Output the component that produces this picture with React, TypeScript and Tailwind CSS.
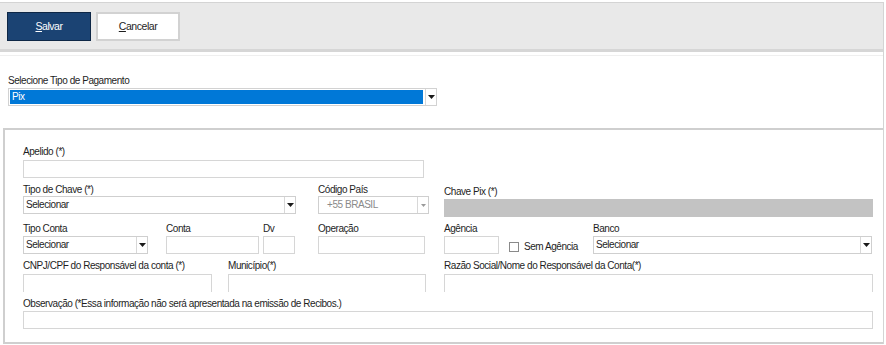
import React from "react";

const font = { fontFamily: '"Liberation Sans", Arial, sans-serif' };

function Arrow() {
  return (
    <svg width="7" height="4" viewBox="0 0 7 4" className="block">
      <path d="M0 0 L7 0 L3.5 4 Z" fill="#1a1a1a" />
    </svg>
  );
}

function Label({ children }: { children: React.ReactNode }) {
  return <div className="h-[13px] leading-[13px] text-[10px] text-[#1e1e1e] whitespace-nowrap">{children}</div>;
}

function Select({ text, w, disabled }: { text: string; w: number; disabled?: boolean }) {
  return (
    <div className="flex h-[18px] border border-[#cfcfcf] bg-white" style={{ width: w }}>
      <div className={"flex-1 leading-[16px] text-[10px] " + (disabled ? "pl-[8px] text-[#8a8a8a]" : "pl-[2px] text-[#1e1e1e]")}>{text}</div>
      <div className="w-[11px] border-l border-[#d8d8d8] flex items-center justify-center">
        {disabled ? (
          <svg width="5" height="3" viewBox="0 0 5 3"><path d="M0 0 L5 0 L2.5 3 Z" fill="#9a9a9a" /></svg>
        ) : (
          <Arrow />
        )}
      </div>
    </div>
  );
}

function Input({ w, open }: { w: number; open?: boolean }) {
  return (
    <div
      className={"h-[18px] bg-white border-[#d6d6d6] " + (open ? "border-t border-l border-r" : "border")}
      style={{ width: w }}
    />
  );
}

export default function App() {
  return (
    <div className="w-[886px] h-[345px] bg-white overflow-hidden tracking-[-0.45px]" style={font}>
      <div className="pt-[2px]">
        <div className="w-[884px] border-t border-r border-[#d4d4d4]">
          {/* Toolbar */}
          <div className="h-[46px] bg-[#e9e9e9] flex items-start pt-[9px] pl-[7px] gap-[5px]">
            <button className="w-[84px] h-[29px] bg-[#1b4373] border border-[#0e2746] text-white text-[10.5px] pt-[1px]">
              <span className="underline">S</span>alvar
            </button>
            <button className="w-[84px] h-[29px] bg-white border-2 border-[#d2d2d2] text-[#1e1e1e] text-[10.5px] pt-[1px]">
              <span className="underline">C</span>ancelar
            </button>
          </div>
          <div className="h-[3px] bg-[#d6d6d6]" />
          <div className="h-[3px] bg-white" />
          <div className="h-[1px] bg-[#efefef]" />

          {/* Tipo de Pagamento */}
          <div className="pl-[8px] pt-[18px]">
            <Label>Selecione Tipo de Pagamento</Label>
            <div className="mt-[1px] flex h-[18px] w-[429px] border border-[#d2d2d2] bg-white">
              <div className="flex-1 m-[1px] mr-[2px] bg-[#0078d7] text-white text-[10px] leading-[14px] pl-[2px]">Pix</div>
              <div className="w-[11px] border-l border-[#d8d8d8] flex items-center justify-center">
                <Arrow />
              </div>
            </div>
          </div>

          {/* Panel */}
          <div className="mt-[22px] ml-[3px] h-[216px] border-t-2 border-l-2 border-b-2 border-[#cfcfcf] pl-[18px] pt-[15px]">
            {/* Row 1 */}
            <div>
              <Label>Apelido (*)</Label>
              <div className="mt-[2px]"><Input w={401} /></div>
            </div>

            {/* Row 2 */}
            <div className="flex mt-[5px]">
              <div className="w-[273px]">
                <Label>Tipo de Chave (*)</Label>
                <Select text="Selecionar" w={273} />
              </div>
              <div className="ml-[22px] w-[111px]">
                <Label>Código País</Label>
                <Select text="+55 BRASIL" w={111} disabled />
              </div>
              <div className="ml-[15px] w-[429px]">
                <div className="mt-[2px]"><Label>Chave Pix (*)</Label></div>
                <div className="mt-[1px] h-[18px] w-[429px] bg-[#c3c3c3]" />
              </div>
            </div>

            {/* Row 3 */}
            <div className="flex mt-[5px]">
              <div className="w-[125px]">
                <Label>Tipo Conta</Label>
                <div className="mt-[1px]"><Select text="Selecionar" w={125} /></div>
              </div>
              <div className="ml-[18px] w-[93px]">
                <Label>Conta</Label>
                <div className="mt-[1px]"><Input w={93} /></div>
              </div>
              <div className="ml-[4px] w-[32px]">
                <Label>Dv</Label>
                <div className="mt-[1px]"><Input w={32} /></div>
              </div>
              <div className="ml-[23px] w-[107px]">
                <Label>Operação</Label>
                <div className="mt-[1px]"><Input w={107} /></div>
              </div>
              <div className="ml-[19px] w-[55px]">
                <Label>Agência</Label>
                <div className="mt-[1px]"><Input w={55} /></div>
              </div>
              <div className="w-[94px] pl-[10px] pt-[17px] flex items-start">
                <div className="w-[10px] h-[10px] border border-[#8a8a8a] bg-white mt-[3px]" />
                <span className="ml-[5px] text-[10px] text-[#1e1e1e] leading-[13px] mt-[1px] whitespace-nowrap">Sem Agência</span>
              </div>
              <div className="w-[279px]">
                <Label>Banco</Label>
                <div className="mt-[1px]"><Select text="Selecionar" w={279} /></div>
              </div>
            </div>

            {/* Row 4 */}
            <div className="flex mt-[5px]">
              <div className="w-[189px]">
                <Label>CNPJ/CPF do Responsável da conta (*)</Label>
                <div className="mt-[2px]"><Input w={189} open /></div>
              </div>
              <div className="ml-[16px] w-[198px]">
                <Label>Município(*)</Label>
                <div className="mt-[2px]"><Input w={198} open /></div>
              </div>
              <div className="ml-[18px] w-[429px]">
                <Label>Razão Social/Nome do Responsável da Conta(*)</Label>
                <div className="mt-[2px]"><Input w={429} open /></div>
              </div>
            </div>

            {/* Row 5 */}
            <div className="mt-[5px]">
              <Label>Observação (*Essa informação não será apresentada na emissão de Recibos.)</Label>
              <div className="mt-[1px]"><Input w={850} /></div>
            </div>
          </div>
        </div>
      </div>
    </div>
  );
}
